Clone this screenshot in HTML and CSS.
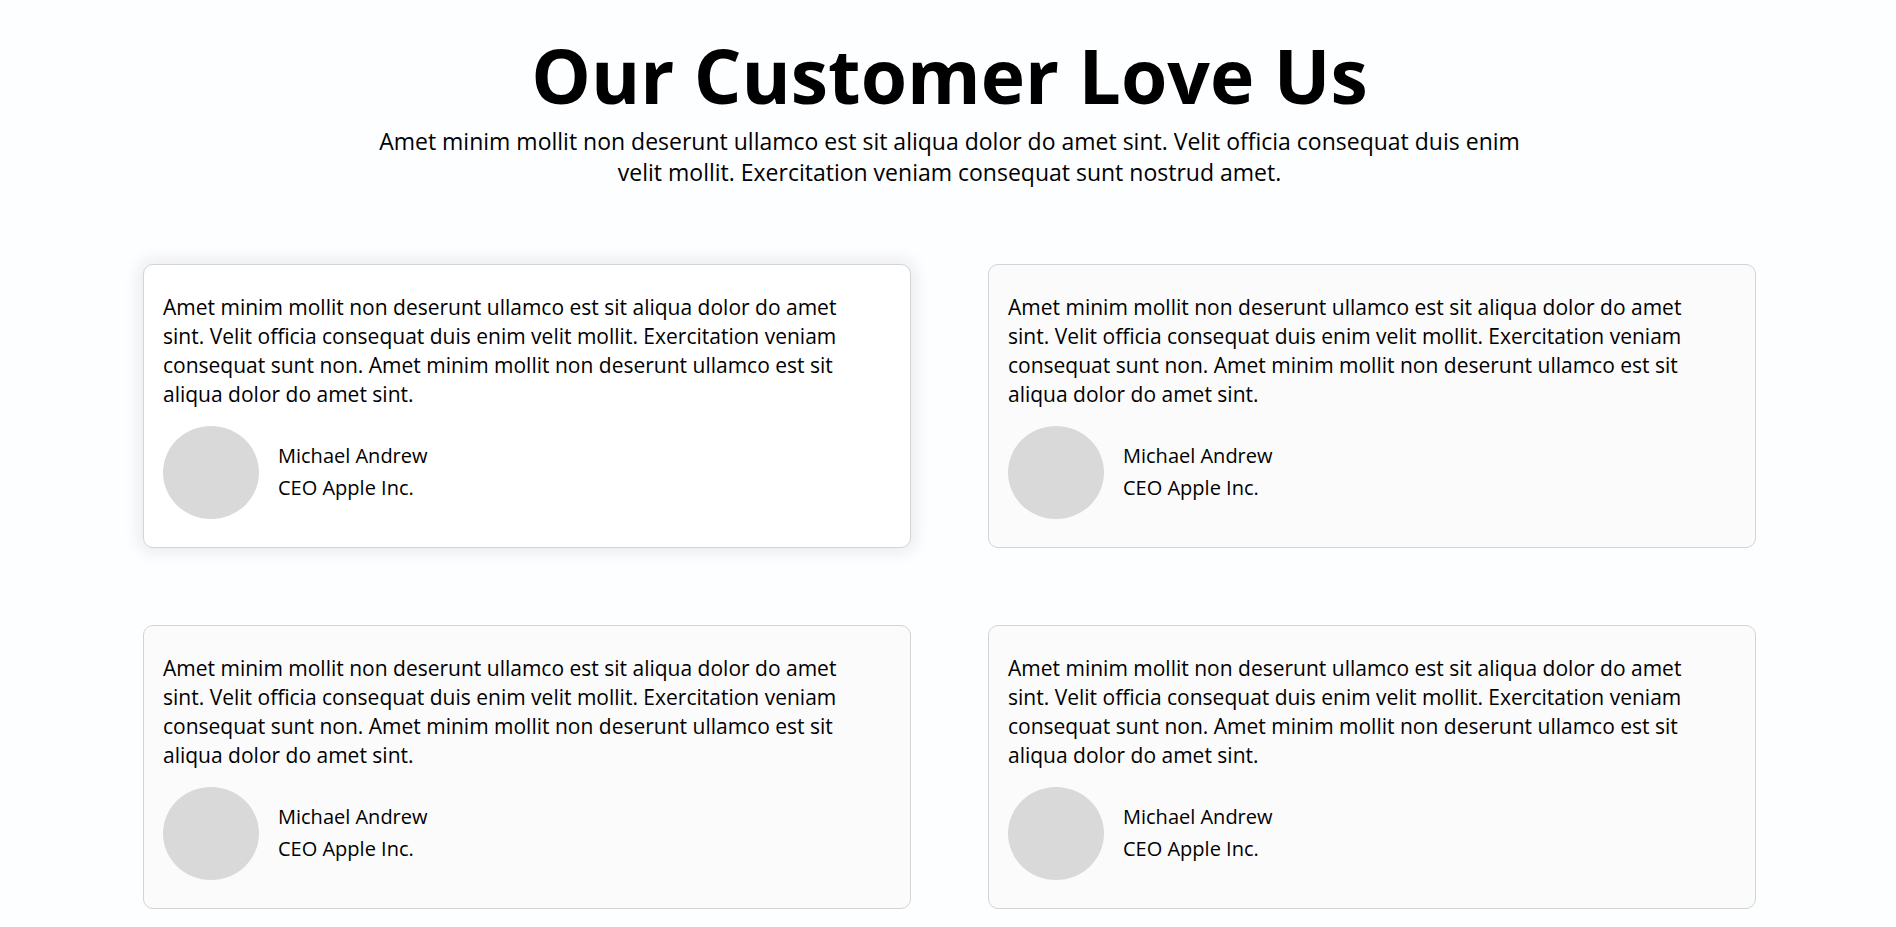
FILE: index.html
```html
<!DOCTYPE html>
<html lang="en">
<head>
<meta charset="utf-8">
<title>Our Customer Love Us</title>
<link rel="stylesheet" href="styles.css">
</head>
<body>
<section class="testimonials">
  <header class="intro">
    <h1 class="title">Our Customer Love Us</h1>
    <p class="lead">Amet minim mollit non deserunt ullamco est sit aliqua dolor do amet sint. Velit officia consequat duis enim velit mollit. Exercitation veniam consequat sunt nostrud amet.</p>
  </header>
  <div class="cards">
    <article class="card card-active">
      <p class="quote">Amet minim mollit non deserunt ullamco est sit aliqua dolor do amet sint. Velit officia consequat duis enim velit mollit. Exercitation veniam consequat sunt non. Amet minim mollit non deserunt ullamco est sit aliqua dolor do amet sint.</p>
      <div class="author"><span class="avatar"></span><div class="person"><p>Michael Andrew</p><p>CEO Apple Inc.</p></div></div>
    </article>
    <article class="card">
      <p class="quote">Amet minim mollit non deserunt ullamco est sit aliqua dolor do amet sint. Velit officia consequat duis enim velit mollit. Exercitation veniam consequat sunt non. Amet minim mollit non deserunt ullamco est sit aliqua dolor do amet sint.</p>
      <div class="author"><span class="avatar"></span><div class="person"><p>Michael Andrew</p><p>CEO Apple Inc.</p></div></div>
    </article>
    <article class="card">
      <p class="quote">Amet minim mollit non deserunt ullamco est sit aliqua dolor do amet sint. Velit officia consequat duis enim velit mollit. Exercitation veniam consequat sunt non. Amet minim mollit non deserunt ullamco est sit aliqua dolor do amet sint.</p>
      <div class="author"><span class="avatar"></span><div class="person"><p>Michael Andrew</p><p>CEO Apple Inc.</p></div></div>
    </article>
    <article class="card">
      <p class="quote">Amet minim mollit non deserunt ullamco est sit aliqua dolor do amet sint. Velit officia consequat duis enim velit mollit. Exercitation veniam consequat sunt non. Amet minim mollit non deserunt ullamco est sit aliqua dolor do amet sint.</p>
      <div class="author"><span class="avatar"></span><div class="person"><p>Michael Andrew</p><p>CEO Apple Inc.</p></div></div>
    </article>
  </div>
</section>
</body>
</html>
```
FILE: styles.css
```css
* { box-sizing: border-box; }
body {
  margin: 0;
  background: #fdfeff;
  color: #000;
  font-family: "Open Sans", "Noto Sans", sans-serif;
}
h1, p { margin: 0; }
.testimonials { padding: 29px 140px 18px 143px; }
.intro { text-align: center; }
.title {
  margin-bottom: 5px;
  font-size: 75px;
  line-height: 92px;
  font-weight: 700;
}
.lead {
  max-width: 1160px;
  margin: 0 auto;
  font-size: 23px;
  line-height: 31px;
}
.cards {
  display: grid;
  grid-template-columns: 1fr 1fr;
  gap: 77px;
  margin-top: 76px;
}
.card {
  padding: 28px 19px;
  border: 1px solid #d3d4d5;
  border-radius: 10px;
  background: #fbfbfb;
}
.card-active {
  background: #fff;
  box-shadow: 0 0 15px 5px #ebecee;
}
.quote {
  padding-right: 20px;
  font-size: 21px;
  line-height: 29px;
}
.author {
  display: flex;
  align-items: center;
  gap: 19px;
  margin-top: 17px;
}
.avatar {
  width: 96px;
  height: 93px;
  border-radius: 50%;
  background: #d9d9d9;
}
.person {
  padding-bottom: 2px;
  font-size: 20px;
  line-height: 32px;
}
```
